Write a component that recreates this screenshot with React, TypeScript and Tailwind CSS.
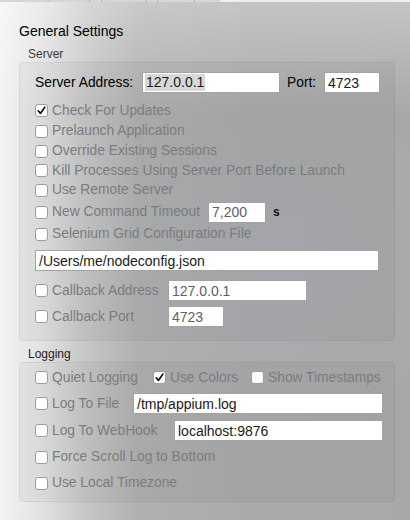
import React from "react";

const FONT = '"Liberation Sans", Arial, Helvetica, sans-serif';

function Check({ checked = false }: { checked?: boolean }) {
  return (
    <span className="relative inline-flex w-[13px] h-[13px] shrink-0 rounded-[3px] bg-white border border-[#9c9c9c]">
      {checked && (
        <svg viewBox="0 0 13 13" className="absolute left-[-1px] top-[-1px] w-[13px] h-[13px]">
          <path d="M3.2 6.8 L5.4 9.4 L9.8 3.2" fill="none" stroke="#111" strokeWidth="1.7" strokeLinecap="round" strokeLinejoin="round" />
        </svg>
      )}
    </span>
  );
}

function Field({ value, className = "", dark = false }: { value: string; className?: string; dark?: boolean }) {
  return (
    <div
      className={`h-[21px] bg-white border border-[#a3a3a3] flex items-center px-[3px] text-[14px] leading-none ${dark ? "text-[#1a1a1a]" : "text-[#5e6066]"} ${className}`}
    >
      {value}
    </div>
  );
}

function CheckRow({ label, checked = false, className = "" }: { label: string; checked?: boolean; className?: string }) {
  return (
    <div className={`flex items-center ${className}`}>
      <Check checked={checked} />
      <span className="ml-[4px] text-[13.8px] text-[#7b7c80] leading-none whitespace-nowrap">{label}</span>
    </div>
  );
}

export default function App() {
  return (
    <div
      className="relative w-[410px] h-[520px] overflow-hidden bg-[radial-gradient(ellipse_at_70%_50%,rgba(165,175,190,0.35),rgba(165,175,190,0)_45%),linear-gradient(to_bottom,rgba(255,255,255,0.32)_0%,rgba(255,255,255,0)_22%),linear-gradient(to_right,#f3f3f3_0%,#e2e2e2_10%,#c4c4c4_22%,#b0b0b0_34%,#aaaaaa_60%,#a8a8a8_100%)]"
      style={{ fontFamily: FONT }}
    >
      {/* top tab strip */}
      <div className="flex h-[2px] bg-[#d6d6d6]">
        <div className="w-[50px] border-r border-[#b5b5b5]" />
        <div className="w-[40px] border-r border-[#b5b5b5]" />
        <div className="w-[12px] border-r border-[#b5b5b5]" />
        <div className="w-[45px] border-r border-[#b5b5b5]" />
        <div className="w-[11px] border-r border-[#b5b5b5]" />
        <div className="w-[37px] border-r border-[#b5b5b5]" />
        <div className="w-[25px]" />
        <div className="flex-1 bg-[#eeeeee]" />
      </div>

      <div className="pl-[19px] pr-[15px]">
        <div className="mt-[20px] h-[18px] text-[14px] leading-[18px] text-black">General Settings</div>

        <div className="mt-[8px] ml-[9px] h-[13px] text-[12px] leading-[13px] text-[#3a3a3a]">Server</div>

        {/* Server panel */}
        <div className="mt-[1px] h-[279px] rounded-[4px] bg-[rgba(0,0,0,0.035)] border border-[rgba(0,0,0,0.05)] pl-[15px] pt-[9px] flex flex-col">
          <div className="flex items-center h-[21px]">
            <span className="text-[13.8px] text-black leading-none w-[107px] whitespace-nowrap">Server Address:</span>
            <div className="w-[138px] h-[21px] bg-white border border-[#a3a3a3] flex items-center px-[2px]">
              <span className="bg-[#d8d8d8] px-[1px] text-[14px] leading-[17px] text-[#1a1a1a]">127.0.0.1</span>
            </div>
            <span className="ml-[7px] w-[37px] text-[13.8px] text-black leading-none">Port:</span>
            <Field value="4723" dark className="w-[56px]" />
          </div>

          <CheckRow label="Check For Updates" checked className="h-[21px] mt-[7px]" />
          <CheckRow label="Prelaunch Application" className="h-[20px]" />
          <CheckRow label="Override Existing Sessions" className="h-[20px]" />
          <CheckRow label="Kill Processes Using Server Port Before Launch" className="h-[19px]" />
          <CheckRow label="Use Remote Server" className="h-[20px]" />
          <div className="flex items-center h-[20px] mt-[2px]">
            <Check />
            <span className="ml-[4px] text-[13.8px] text-[#7b7c80] leading-none whitespace-nowrap w-[156px]">New Command Timeout</span>
            <Field value="7,200" className="w-[58px] h-[20px]" />
            <span className="ml-[7px] text-[12px] font-bold text-[#111] leading-none">s</span>
          </div>
          <CheckRow label="Selenium Grid Configuration File" className="h-[20px] mt-[2px]" />
          <Field value="/Users/me/nodeconfig.json" dark className="w-[344px] mt-[6px] text-[13.5px]" />
          <div className="flex items-center h-[21px] mt-[9px]">
            <Check />
            <span className="ml-[4px] text-[13.8px] text-[#7b7c80] leading-none whitespace-nowrap w-[116px]">Callback Address</span>
            <Field value="127.0.0.1" className="w-[139px]" />
          </div>
          <div className="flex items-center h-[21px] mt-[5px]">
            <Check />
            <span className="ml-[4px] text-[13.8px] text-[#7b7c80] leading-none whitespace-nowrap w-[116px]">Callback Port</span>
            <Field value="4723" className="w-[56px]" />
          </div>
        </div>

        <div className="mt-[7px] ml-[9px] h-[13px] text-[12px] leading-[13px] text-[#1f1f1f]">Logging</div>

        {/* Logging panel */}
        <div className="mt-[1px] h-[140px] rounded-[4px] bg-[rgba(0,0,0,0.035)] border border-[rgba(0,0,0,0.05)] pl-[15px] pt-[6px] flex flex-col">
          <div className="flex items-center h-[18px]">
            <CheckRow label="Quiet Logging" className="w-[118px]" />
            <CheckRow label="Use Colors" checked className="w-[98px]" />
            <CheckRow label="Show Timestamps" />
          </div>
          <div className="flex items-center h-[21px] mt-[6px]">
            <Check />
            <span className="ml-[4px] text-[13.8px] text-[#7b7c80] leading-none whitespace-nowrap w-[81px]">Log To File</span>
            <Field value="/tmp/appium.log" dark className="w-[250px]" />
          </div>
          <div className="flex items-center h-[21px] mt-[6px]">
            <Check />
            <span className="ml-[4px] text-[13.8px] text-[#7b7c80] leading-none whitespace-nowrap w-[122px]">Log To WebHook</span>
            <Field value="localhost:9876" dark className="w-[209px]" />
          </div>
          <CheckRow label="Force Scroll Log to Bottom" className="h-[20px] mt-[6px]" />
          <CheckRow label="Use Local Timezone" className="h-[20px] mt-[6px]" />
        </div>
      </div>
    </div>
  );
}
